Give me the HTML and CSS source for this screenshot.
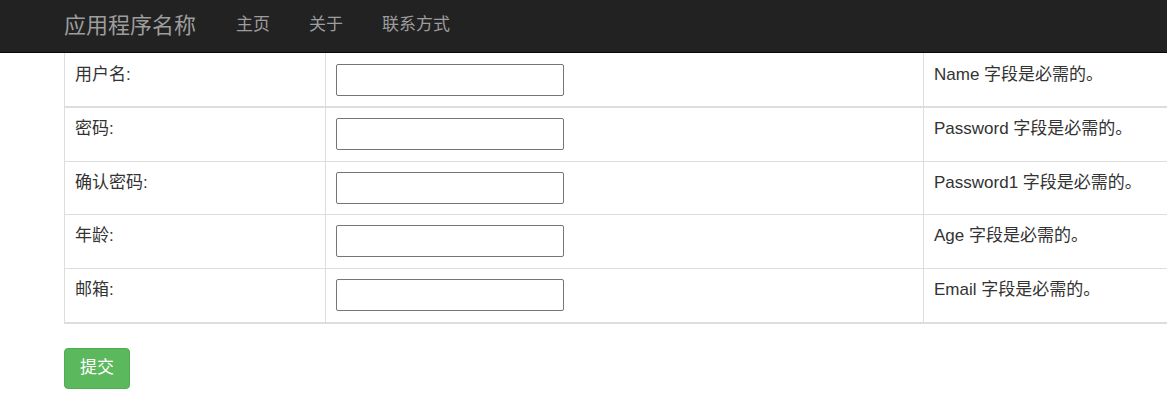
FILE: index.html
```html
<!DOCTYPE html>
<html lang="zh-CN">
<head>
<meta charset="utf-8">
<title>注册</title>
<link rel="stylesheet" href="styles.css">
</head>
<body>
<nav class="navbar">
  <a class="brand" href="#">应用程序名称</a>
  <ul class="nav">
    <li><a href="#">主页</a></li>
    <li><a href="#">关于</a></li>
    <li><a href="#">联系方式</a></li>
  </ul>
</nav>
<main class="content">
  <form class="form">
    <table class="grid">
      <colgroup>
        <col class="c1"><col class="c2"><col class="c3">
      </colgroup>
      <thead>
        <tr>
          <td class="label">用户名:</td>
          <td><input class="field" type="text"></td>
          <td class="msg">Name 字段是必需的。</td>
        </tr>
      </thead>
      <tbody>
        <tr>
          <td class="label">密码:</td>
          <td><input class="field" type="password"></td>
          <td class="msg">Password 字段是必需的。</td>
        </tr>
        <tr>
          <td class="label">确认密码:</td>
          <td><input class="field" type="password"></td>
          <td class="msg">Password1 字段是必需的。</td>
        </tr>
        <tr>
          <td class="label">年龄:</td>
          <td><input class="field" type="text"></td>
          <td class="msg">Age 字段是必需的。</td>
        </tr>
        <tr>
          <td class="label">邮箱:</td>
          <td><input class="field" type="text"></td>
          <td class="msg">Email 字段是必需的。</td>
        </tr>
      </tbody>
    </table>
    <button class="btn-submit" type="submit">提交</button>
  </form>
</main>
</body>
</html>
```
FILE: styles.css
```css
html, body {
  margin: 0;
  padding: 0;
  overflow-x: hidden;
  background: #fff;
}
body {
  font-family: "Liberation Sans", "Noto Sans CJK SC", sans-serif;
  font-size: 17px;
  color: #333;
}
.navbar {
  display: flex;
  align-items: center;
  height: 52px;
  background: #222;
  border-bottom: 1px solid #080808;
  padding-left: 64px;
  box-sizing: content-box;
}
.brand {
  font-size: 22px;
  line-height: 30px;
  color: #9d9d9d;
  text-decoration: none;
  margin-right: 40px;
  margin-top: -1px;
}
.nav {
  display: flex;
  gap: 39px;
  list-style: none;
  margin: 0;
  padding: 0;
}
.nav a {
  color: #9d9d9d;
  text-decoration: none;
  font-size: 17px;
  line-height: 24px;
  display: block;
  margin-top: -2px;
}
.content {
  padding-left: 64px;
}
.grid {
  border-collapse: collapse;
  table-layout: fixed;
  width: 1170px;
  border-left: 1px solid #ddd;
  border-bottom: 2px solid #ddd;
}
.c1 { width: 261px; }
.c2 { width: 598px; }
.grid td {
  padding: 10px 10px 10.67px;
  vertical-align: top;
  border-top: 1px solid #ddd;
  border-left: 1px solid #ddd;
  line-height: 21px;
}
.grid thead td {
  border-top: 0;
  border-bottom: 2px solid #ddd;
  padding-top: 11px;
  padding-bottom: 10px;
}
.grid thead + tbody tr:first-child td {
  border-top: 0;
}
.field {
  display: block;
  box-sizing: border-box;
  width: 228px;
  height: 32px;
  margin: 0;
  border: 1px solid #767676;
  border-radius: 2px;
  background: #fff;
  font: inherit;
}
.btn-submit {
  margin-top: 24px;
  font-family: inherit;
  font-size: 17px;
  line-height: 24px;
  padding: 7.5px 15px;
  color: #fff;
  background: #5cb85c;
  border: 1px solid #4cae4c;
  border-radius: 4px;
  cursor: pointer;
}
```
